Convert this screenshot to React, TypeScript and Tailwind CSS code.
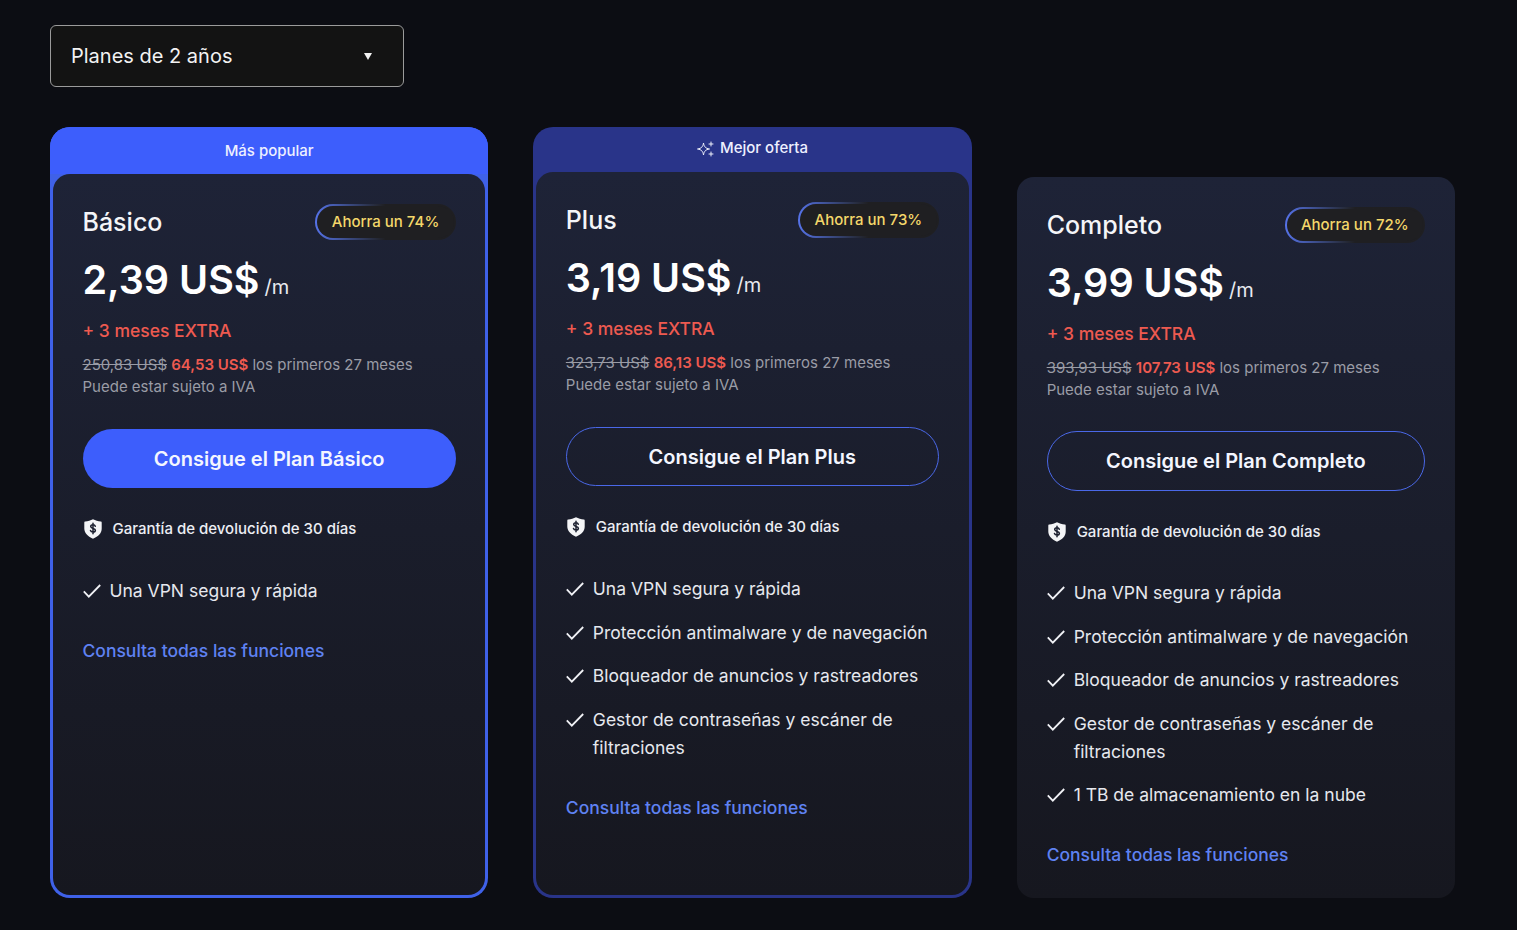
import React from "react";

interface Plan {
  name: string;
  save: string;
  price: string;
  oldPrice: string;
  newPrice: string;
  cta: string;
  features: string[];
  // el botón y la lista del tercer plan caen 1px distinto
  buttonSize: string;
  listGap: string;
}

const allFeatures = [
  "Una VPN segura y rápida",
  "Protección antimalware y de navegación",
  "Bloqueador de anuncios y rastreadores",
  "Gestor de contraseñas y escáner de filtraciones",
  "1 TB de almacenamiento en la nube",
];

const plans: Plan[] = [
  {
    name: "Básico",
    save: "Ahorra un 74%",
    price: "2,39 US$",
    oldPrice: "250,83 US$",
    newPrice: "64,53 US$",
    cta: "Consigue el Plan Básico",
    features: allFeatures.slice(0, 1),
    buttonSize: "mt-[31px] h-[59px]",
    listGap: "mt-[36px]",
  },
  {
    name: "Plus",
    save: "Ahorra un 73%",
    price: "3,19 US$",
    oldPrice: "323,73 US$",
    newPrice: "86,13 US$",
    cta: "Consigue el Plan Plus",
    features: allFeatures.slice(0, 4),
    buttonSize: "mt-[31px] h-[59px]",
    listGap: "mt-[36px]",
  },
  {
    name: "Completo",
    save: "Ahorra un 72%",
    price: "3,99 US$",
    oldPrice: "393,93 US$",
    newPrice: "107,73 US$",
    cta: "Consigue el Plan Completo",
    features: allFeatures,
    buttonSize: "mt-[30px] h-[60px]",
    listGap: "mt-[35px]",
  },
];

const ShieldIcon: React.FC = () => (
  <svg width="20" height="22" viewBox="0 0 20 22" className="shrink-0">
    <path
      d="M10 1.2c2.4 1.3 5 2 7.8 2.2.5 0 .9.5.9 1v6.2c0 4.6-3.2 8-8.7 10.2C4.5 18.400 1.300 15 1.300 10.600V4.400c0-.5.4-1 .9-1C5 3.200 7.600 2.500 10 1.200z"
      fill="#f4f5f7"
    />
    <path
      d="M12.300 8.200c-.3-.9-1.200-1.400-2.300-1.400-1.300 0-2.300.7-2.300 1.800 0 2.400 4.700 1.300 4.700 3.700 0 1.100-1 1.800-2.400 1.800-1.200 0-2.200-.6-2.500-1.600M10 5.300v10.400"
      fill="none"
      stroke="#1c2030"
      strokeWidth="1.500"
      strokeLinecap="round"
    />
  </svg>
);

const SparkleIcon: React.FC = () => (
  <svg width="17" height="16" viewBox="0 0 17 16" fill="none" stroke="#eef0fa" strokeWidth="1" className="shrink-0">
    <path d="M6.500 2C7 5.500 8.500 7.500 12.500 8 8.500 8.500 7 10.500 6.500 14 6 10.500 4.500 8.500.5 8 4.500 7.500 6 5.500 6.500 2z" strokeLinejoin="round" />
    <path d="M14 1v4M12 3h4M14 11v4M12 13h4" strokeLinecap="round" />
  </svg>
);

const CheckIcon: React.FC = () => (
  <svg width="18" height="14" viewBox="0 0 18 14" fill="none" stroke="#f0f1f5" strokeWidth="1.800" className="shrink-0 mt-[7px]">
    <path d="M.8 7.400 5.800 12.600 17.200 1" />
  </svg>
);

const PlanBody: React.FC<{ plan: Plan; primary: boolean; shape: string }> = ({ plan, primary, shape }) => (
  <div className={`flex-1 bg-linear-to-b from-[#1e2337] to-[#16171f] ${shape} pt-[30px] pb-[29px]`}>
    <div className="flex items-center justify-between h-[36px]">
      <h3 className="text-[25px] font-medium text-[#f4f5f8] leading-[36px]">{plan.name}</h3>
      <div className="rounded-full p-[2px] bg-linear-to-r from-[#5673ea] to-[#1f1f22] to-50% h-[36px]">
        <div className="flex items-center justify-center h-full w-[136.500px] rounded-full bg-[#1f1f22] text-[15px] font-medium text-[#f4d76a]">
          {plan.save}
        </div>
      </div>
    </div>

    <div className="mt-[16px] flex items-baseline text-white h-[48px] leading-[48px]">
      <span className="text-[39.500px] font-semibold">{plan.price}</span>
      <span className="ml-[5px] text-[20px] text-[#e8eaf0]">/m</span>
    </div>

    <div className="mt-[13px] text-[17.500px] leading-[28px] font-medium text-[#ee5a50]">+ 3 meses EXTRA</div>

    <div className="mt-[9px] text-[15px] leading-[22px] text-[#9a9ca6]">
      <div>
        <span className="line-through">{plan.oldPrice}</span>{" "}
        <span className="font-semibold text-[#ee5a50]">{plan.newPrice}</span> los primeros 27 meses
      </div>
      <div>Puede estar sujeto a IVA</div>
    </div>

    <button
      className={`${plan.buttonSize} w-full rounded-full text-[20px] font-semibold text-[#f4f6ff] ${
        primary ? "bg-[#3d5efc]" : "border border-[#4a68e8] bg-transparent"
      }`}
    >
      {plan.cta}
    </button>

    <div className="mt-[29px] flex items-center gap-[10px] h-[24px] text-[15px] font-medium text-[#eceef4]">
      <ShieldIcon />
      <span>Garantía de devolución de 30 días</span>
    </div>

    <ul className={`${plan.listGap} flex flex-col gap-[15.500px]`}>
      {plan.features.map((f) => (
        <li key={f} className="flex items-start gap-[9px] text-[17.500px] leading-[28px] text-[#e6e8ee]">
          <CheckIcon />
          <span>{f}</span>
        </li>
      ))}
    </ul>

    <a className="block mt-[32px] text-[17.500px] leading-[28px] font-medium text-[#5f82f2]">Consulta todas las funciones</a>
  </div>
);

const App: React.FC = () => {
  return (
    <div className="min-h-[930px] bg-[#0c0d13] pl-[50px] pr-[62px] pt-[25px] font-['Inter',sans-serif]">
      <div className="flex items-center justify-between w-[354px] h-[62px] rounded-md border border-[#9b9b9b] bg-[#131313] pl-[20px] pr-[31px] text-[20px] text-[#f2f2f2]">
        <span>Planes de 2 años</span>
        <span className="w-0 h-0 border-l-[4px] border-r-[4px] border-t-[7px] border-l-transparent border-r-transparent border-t-[#f2f2f2]" />
      </div>

      <div className="mt-[40px] grid grid-cols-3 gap-[45px]">
        {/* Básico */}
        <div className="flex flex-col rounded-[20px] bg-[#3f61e8] px-[3px] pb-[3px]">
          <div className="h-[47px] flex items-center justify-center pt-[1px] text-[15px] font-medium text-[#eef0ff] bg-[#3d5efc] -mx-[3px] rounded-t-[20px]">
            Más popular
          </div>
          <PlanBody plan={plans[0]} primary shape="rounded-[17px] pl-[29.500px] pr-[29.500px]" />
        </div>

        {/* Plus */}
        <div className="flex flex-col rounded-[20px] bg-[#293489] px-[3px] pb-[3px]">
          <div className="h-[45px] flex items-center justify-center gap-[6px] pb-[2px] text-[15px] font-medium text-[#eef0ff]">
            <SparkleIcon />
            Mejor oferta
          </div>
          <PlanBody plan={plans[1]} primary={false} shape="rounded-[17px] pl-[29.500px] pr-[30px]" />
        </div>

        {/* Completo */}
        <div className="mt-[50px] flex flex-col">
          <PlanBody plan={plans[2]} primary={false} shape="rounded-[17px] px-[30px]" />
        </div>
      </div>
    </div>
  );
};

export default App;
